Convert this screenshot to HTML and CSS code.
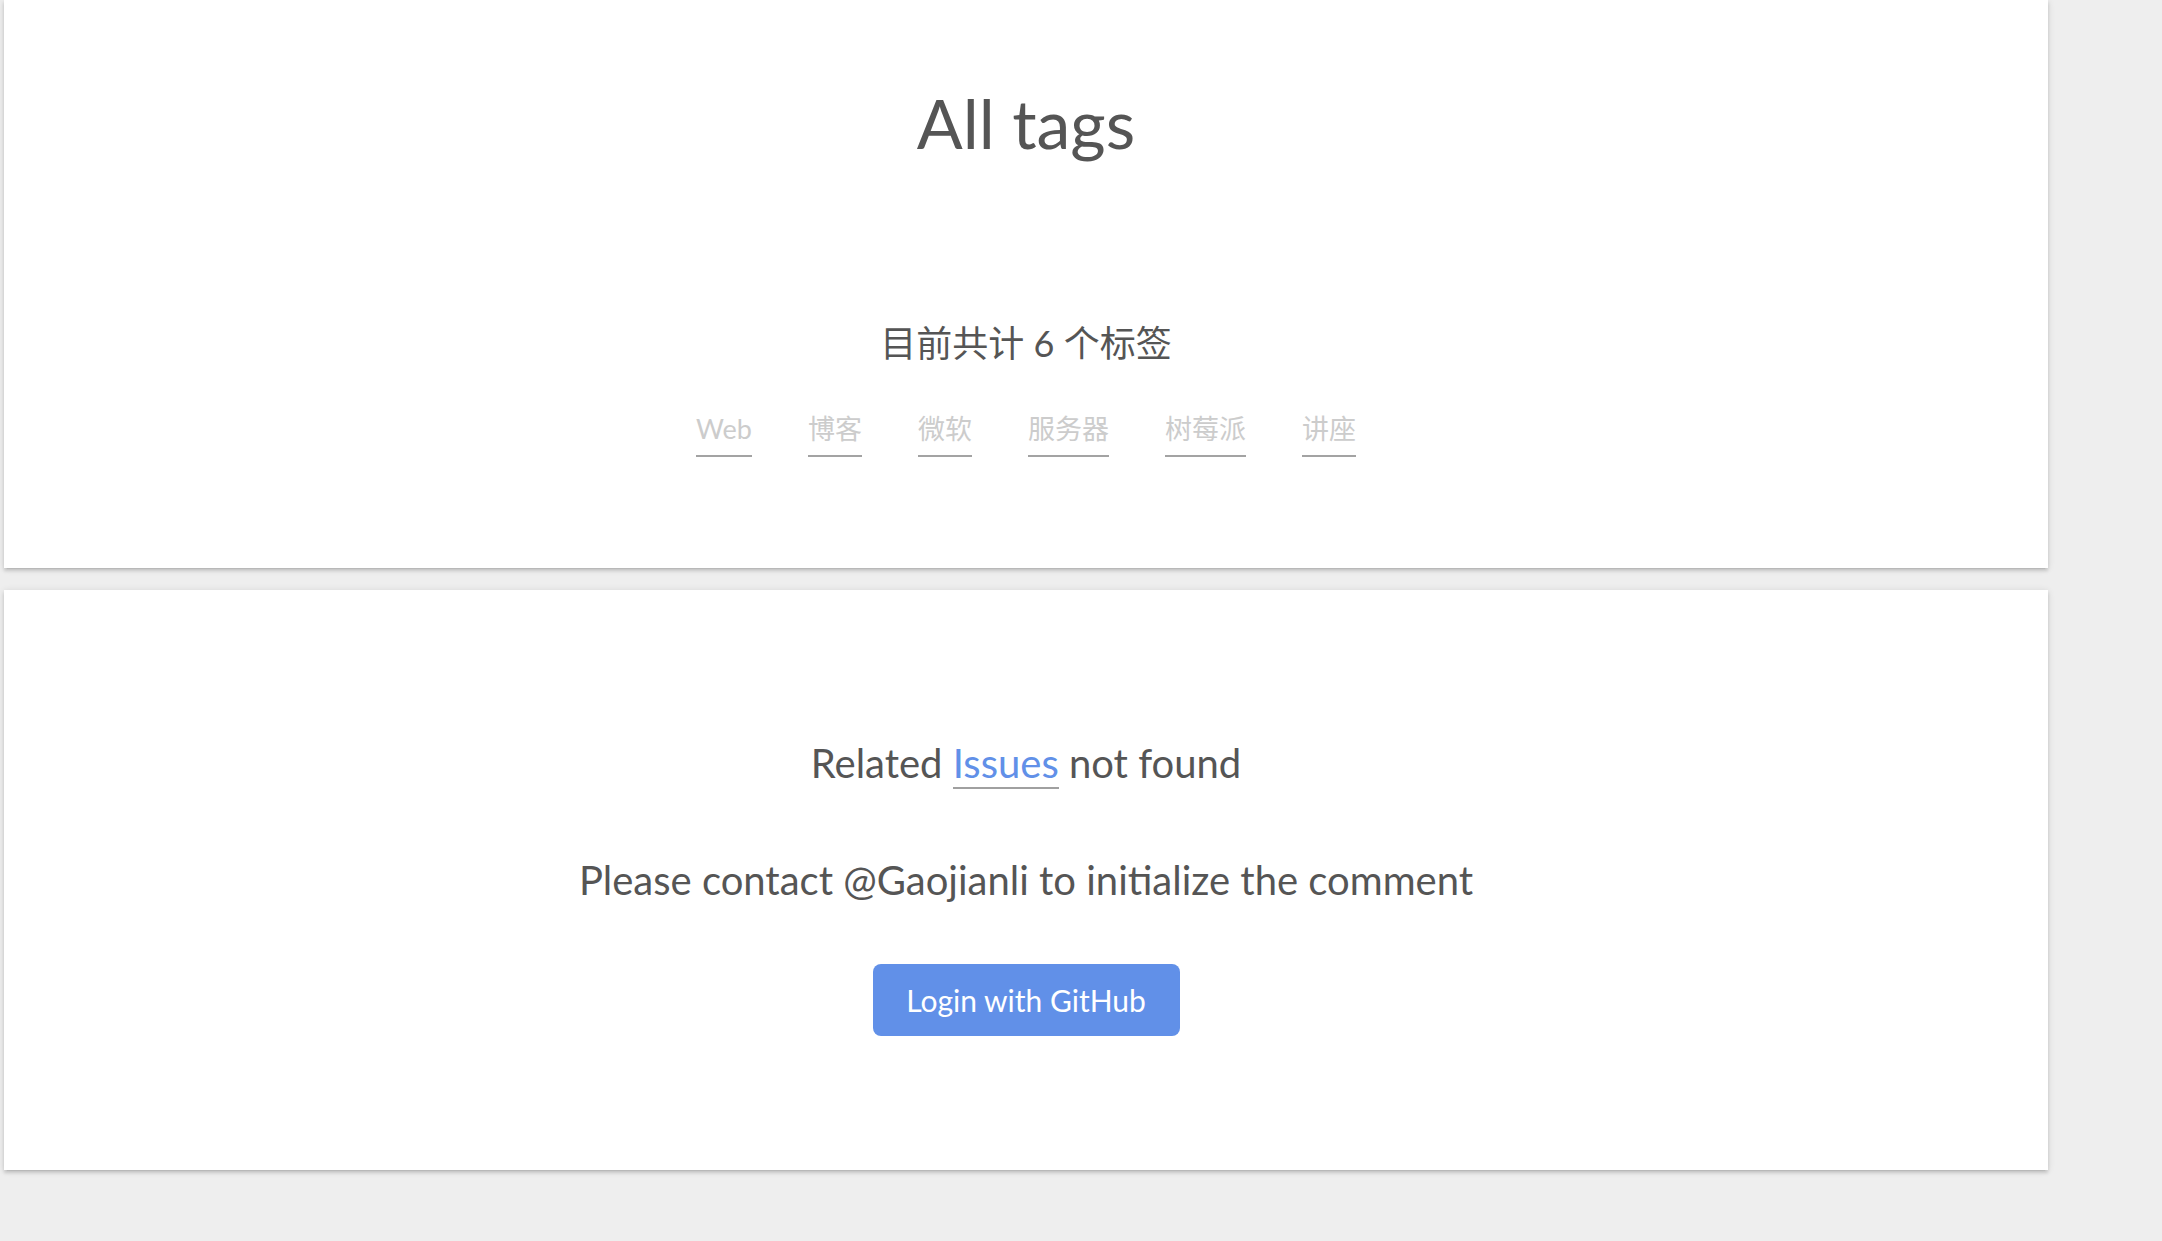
FILE: index.html
```html
<!DOCTYPE html>
<html lang="zh-CN">
<head>
<meta charset="utf-8">
<title>All tags</title>
<link rel="stylesheet" href="styles.css">
</head>
<body>
<main class="main">
  <section class="card card-tags">
    <h1 class="page-title">All tags</h1>
    <div class="tag-count">目前共计 6 个标签</div>
    <nav class="tag-cloud">
      <a class="tag" href="#">Web</a>
      <a class="tag" href="#">博客</a>
      <a class="tag" href="#">微软</a>
      <a class="tag" href="#">服务器</a>
      <a class="tag" href="#">树莓派</a>
      <a class="tag" href="#">讲座</a>
    </nav>
  </section>
  <section class="card card-comments">
    <p class="gt-line gt-related">Related <a class="gt-link" href="#">Issues</a> not found</p>
    <p class="gt-line gt-contact">Please contact @Gaojianli to initialize the comment</p>
    <div class="gt-actions">
      <button class="gt-btn" type="button">Login with GitHub</button>
    </div>
  </section>
</main>
</body>
</html>
```

FILE: styles.css
```css
html, body {
  margin: 0;
  padding: 0;
}

body {
  background: #eeeeee;
  font-family: Lato, "Noto Sans CJK SC", sans-serif;
  color: #555555;
  height: 1241px;
  overflow: hidden;
}

.main {
  width: 2044px;
  margin-left: 4px;
  display: flex;
  flex-direction: column;
  gap: 22px;
}

.card {
  background: #ffffff;
  box-shadow: 0 3px 3px 0 rgba(0, 0, 0, 0.12),
              0 4px 1px -3px rgba(0, 0, 0, 0.06),
              0 1px 7px 0 rgba(0, 0, 0, 0.12);
  text-align: center;
  box-sizing: border-box;
}

.card-tags {
  height: 568px;
  padding-top: 82px;
}

.page-title {
  margin: 0;
  font-size: 68px;
  line-height: 1.2;
  font-weight: 400;
  color: #555555;
}

.tag-count {
  margin-top: 158px;
  font-size: 36px;
  line-height: 1.2;
  color: #555555;
}

.tag-cloud {
  margin-top: 47px;
  display: flex;
  justify-content: center;
  align-items: flex-start;
  gap: 56px;
}

.tag {
  display: block;
  font-size: 27px;
  line-height: 34px;
  padding-bottom: 9px;
  color: #cccccc;
  text-decoration: none;
  border-bottom: 2px solid #a3a3a3;
}

.card-comments {
  height: 580px;
  padding-top: 149px;
}

.gt-line {
  margin: 0;
  font-size: 40px;
  line-height: 48px;
  color: #555555;
}

.gt-contact {
  margin-top: 69px;
}

.gt-link {
  color: #6190e8;
  text-decoration: none;
  border-bottom: 2px solid #a0a0a0;
}

.gt-actions {
  margin-top: 60px;
  display: flex;
  justify-content: center;
}

.gt-btn {
  width: 307px;
  height: 72px;
  padding: 0;
  border: 0;
  border-radius: 8px;
  background: #6190e8;
  color: #ffffff;
  font-family: Lato, "Noto Sans CJK SC", sans-serif;
  font-size: 30px;
  line-height: 72px;
  cursor: pointer;
}
```
